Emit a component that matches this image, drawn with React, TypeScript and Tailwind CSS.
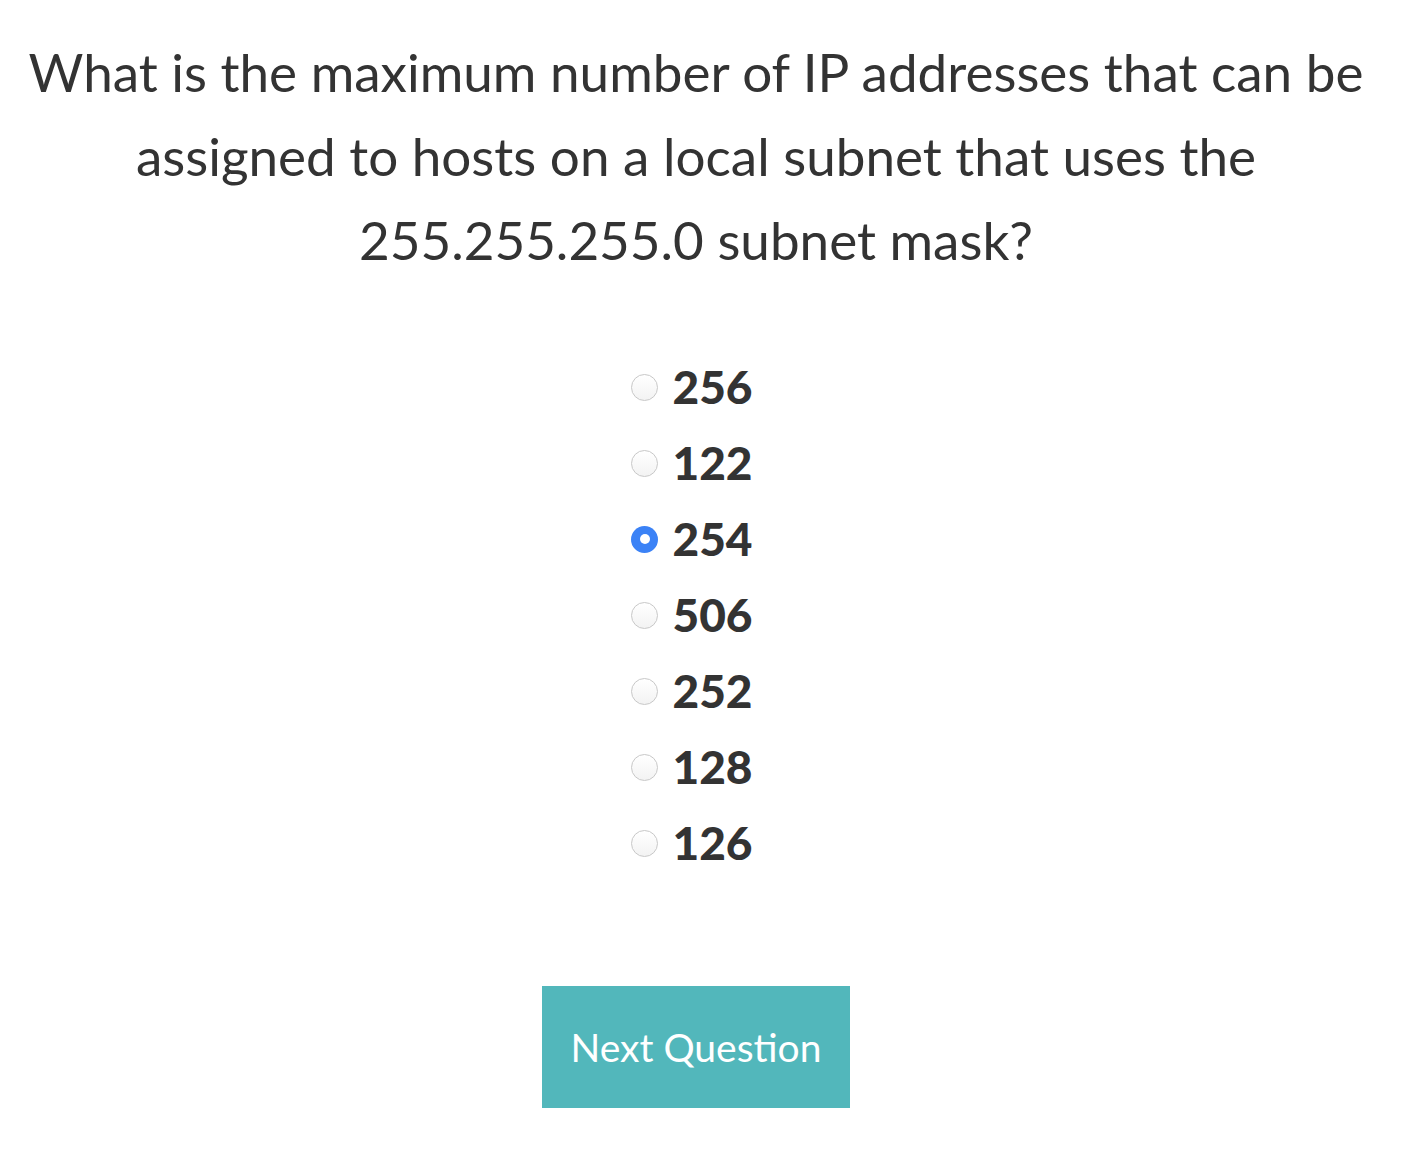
import { useState } from "react";

const answers = ["256", "122", "254", "506", "252", "128", "126"];

const Radio = ({ checked }: { checked: boolean }) =>
  checked ? (
    <span className="flex items-center justify-center w-[27px] h-[27px] rounded-full bg-[#3b82f6]">
      <span className="w-[10px] h-[10px] rounded-full bg-white" />
    </span>
  ) : (
    <span className="w-[27px] h-[27px] rounded-full border border-[#c8c8c8] bg-gradient-to-b from-white to-[#f3f3f3]" />
  );

const App = () => {
  const [selected, setSelected] = useState("254");

  return (
    <div className="w-[1392px] flex flex-col items-center pt-[30px] text-[#333333] font-['Lato','Liberation_Sans',sans-serif]">
      <h1 className="text-center text-[53px] leading-[84px] font-normal">
        What is the maximum number of IP addresses that can be
        <br />
        assigned to hosts on a local subnet that uses the
        <br />
        255.255.255.0 subnet mask?
      </h1>

      <ul className="mt-[67px] mr-[8px] flex flex-col">
        {answers.map((answer) => (
          <li
            key={answer}
            onClick={() => setSelected(answer)}
            className="h-[76px] flex items-center gap-[14px] cursor-pointer"
          >
            <Radio checked={selected === answer} />
            <span className="text-[46px] font-black leading-none">{answer}</span>
          </li>
        ))}
      </ul>

      <button className="mt-[105px] w-[308px] h-[122px] bg-[#52b7bb] text-white text-[39px]">
        Next Question
      </button>
    </div>
  );
};

export default App;
